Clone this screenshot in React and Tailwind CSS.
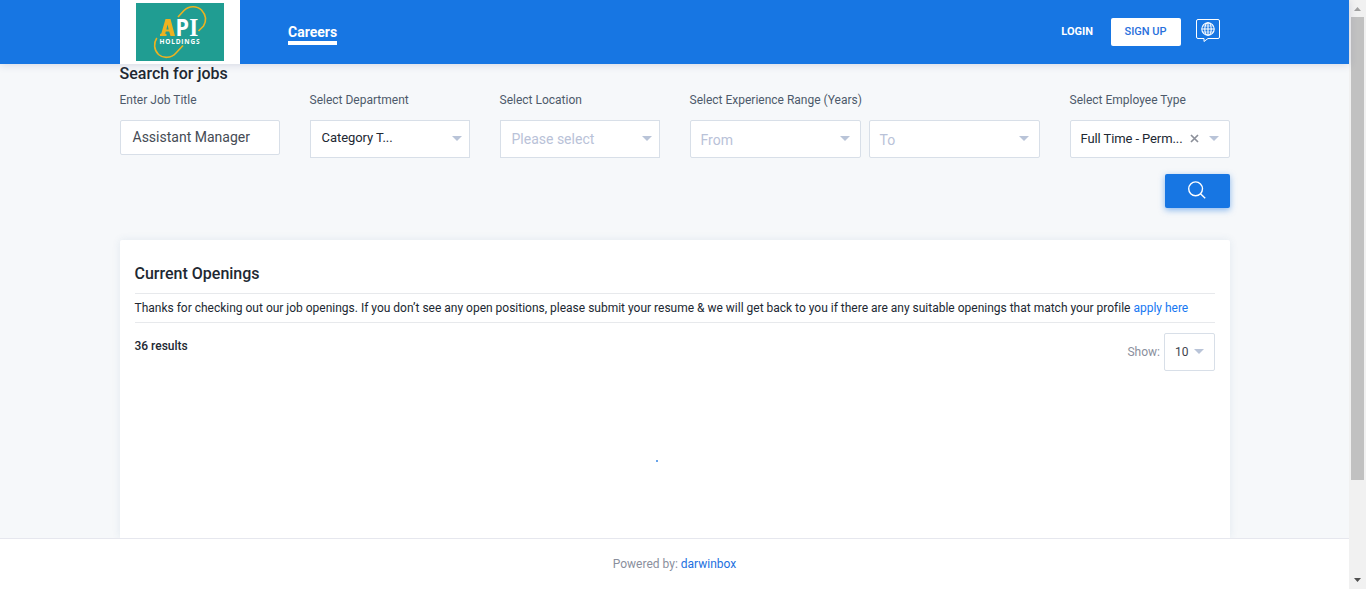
import React from "react";

function Caret({ className = "" }) {
  return (
    <svg viewBox="0 0 10 5" className={`mb-px h-[5px] w-[10px] shrink-0 fill-[#b9c4d8] ${className}`}>
      <path d="M0 0h10L5 5z" />
    </svg>
  );
}

function Label({ children }) {
  return <div className="-ml-[0.5px] h-4 whitespace-nowrap text-[12px] leading-4 text-[#4d5a6b]">{children}</div>;
}

function Select({ className = "", children, text = "" }) {
  return (
    <div className={`flex h-[38px] items-center justify-between border border-[#d8dfe8] bg-white ${className}`}>
      <span className={`whitespace-nowrap leading-4 ${text}`}>{children}</span>
      <Caret />
    </div>
  );
}

function Logo() {
  return (
    <svg viewBox="0 0 88 58" className="h-[58px] w-[88px] bg-[#209d92]">
      <g fill="none" stroke="#edb220" strokeWidth="1.6">
        <path d="M42 14 L48 7.5 C53 2.5 61 2.5 65.500 7 C70 12 70.500 18 67.500 23 L62.500 28" />
        <path d="M20.800 35 C17.500 40 17.800 47 22.500 51.500 C27 55.500 35 55.500 40 50 L47 42.500" />
      </g>
      <path fillRule="evenodd" d="M24 33v-2l1.300-.4L29.500 16h5L39 33h-4.500l-1.300-4.500h-3.400l-.6 2.200 1.300.3v2zM30.400 26.500h2.300l-1.200-5z" fill="#edb220" />
      <text x="39.500" y="33" className="fill-white font-['Noto_Sans'] text-[24px] font-bold" textLength="13.500" lengthAdjust="spacingAndGlyphs">P</text>
      <text x="53.300" y="33" className="fill-white font-['Liberation_Serif'] text-[26px] font-bold" textLength="9" lengthAdjust="spacingAndGlyphs">I</text>
      <text x="23.500" y="41" className="fill-white font-['Open_Sans'] text-[6.500px] font-bold" textLength="40" lengthAdjust="spacing">HOLDINGS</text>
    </svg>
  );
}

function LanguageIcon() {
  return (
    <svg viewBox="0 0 24 24" className="h-6 w-6" fill="none" stroke="white">
      <path d="M2 .5h20a1.500 1.500 0 0 1 1.500 1.500v16a1.500 1.500 0 0 1-1.500 1.500H12l-4 3v-3H2A1.500 1.500 0 0 1 .5 18V2A1.500 1.500 0 0 1 2 .5z" />
      <g strokeWidth="1.100">
        <circle cx="12" cy="10" r="6.200" />
        <ellipse cx="12" cy="10" rx="3.200" ry="6.200" />
        <path d="M12 3.800v12.400M5.800 10h12.400" />
        <path strokeWidth="0.600" d="M7 7h10M7 13h10" />
      </g>
    </svg>
  );
}

function Header() {
  return (
    <header className="relative z-10 flex h-16 shrink-0 bg-[#1776e3] pl-[120px] shadow-[0_1px_8px_rgba(60,70,130,0.18)]">
      <div className="flex h-16 w-[120px] justify-center bg-white pt-[3px]">
        <Logo />
      </div>
      <nav className="ml-12 pt-6">
        <a className="block h-[21px] w-[49px] whitespace-nowrap border-b-4 border-white text-[14px] font-bold leading-4 text-white">Careers</a>
      </nav>
      <div className="ml-auto mr-[129px] flex items-start pt-[18px]">
        <a className="mr-[18px] mt-1.5 text-[11px] font-bold leading-4 text-white">LOGIN</a>
        <a className="mr-[15px] flex h-7 w-[70px] items-center justify-center rounded-[2px] bg-white pr-px text-[11px] font-medium leading-4 text-[#2870dc]">SIGN UP</a>
        <div className="mt-px"><LanguageIcon /></div>
      </div>
    </header>
  );
}

function SearchForm() {
  return (
    <section>
      <h2 className="-ml-[0.5px] mt-px h-[18px] text-[16px] font-medium leading-[18px] text-[#212832]">Search for jobs</h2>
      <div className="mt-[9px] flex gap-[30px]">
        <div className="w-[160px]">
          <Label>Enter Job Title</Label>
          <div className="mt-3 flex h-[35px] items-center rounded-[2px] border border-[#d8dfe8] bg-white pl-[11.5px] pb-0.5 text-[14px] leading-4 text-[#454b54]">Assistant Manager</div>
        </div>
        <div className="w-[160px]">
          <Label>Select Department</Label>
          <Select className="mt-3 pl-[10.5px] pr-[7px]" text="-mt-[3px] text-[13px] tracking-[-0.05px] text-[#212832]">Category T...</Select>
        </div>
        <div className="w-[160px]">
          <Label>Select Location</Label>
          <Select className="mt-3 pl-[10.5px] pr-[7px]" text="text-[14px] text-[#b9c2d8]">Please select</Select>
        </div>
        <div className="w-[350px]">
          <Label>Select Experience Range (Years)</Label>
          <div className="mt-3 flex gap-2">
            <Select className="flex-1 rounded-[2px] pl-[9.5px] pr-[10px]" text="mt-0.5 text-[14px] text-[#b9c2d8]">From</Select>
            <Select className="flex-1 rounded-[2px] pl-[9.5px] pr-[10px]" text="mt-0.5 text-[14px] text-[#b9c2d8]">To</Select>
          </div>
        </div>
        <div className="w-[160px]">
          <Label>Select Employee Type</Label>
          <div className="mt-3 flex h-[38px] items-center rounded-[2px] border border-[#d8dfe8] bg-white pl-[9.5px]">
            <span className="w-[109.5px] whitespace-nowrap text-[13px] leading-4 tracking-[-0.1px] text-[#212832]">Full Time - Perm...</span>
            <svg viewBox="0 0 9 9" className="mb-0.5 h-[9px] w-[9px] shrink-0 stroke-[#8c909a]" strokeWidth="1.700"><path d="M1 1l7 7M8 1L1 8" /></svg>
            <Caret className="ml-[10px]" />
          </div>
        </div>
      </div>
      <button className="ml-auto mt-4 flex h-[34px] w-[65px] items-center justify-center rounded-[2px] bg-[#1776e3] pr-0.5 shadow-[0_2px_6px_rgba(23,118,227,0.5)]">
        <svg viewBox="0 0 18 18" className="-mt-0.5 h-[18px] w-[18px]" fill="none" stroke="white" strokeWidth="1.400">
          <circle cx="7.600" cy="7.800" r="6.900" />
          <path d="M12.500 12.700l4.700 4.500" />
        </svg>
      </button>
    </section>
  );
}

function Openings() {
  return (
    <section className="mt-8 flex-1 rounded-t-[2px] bg-white px-[15px] pt-6 shadow-[0_0_8px_rgba(50,100,150,0.1)]">
      <h2 className="-ml-[0.5px] h-[29px] text-[16px] font-medium leading-[19px] text-[#212832]">Current Openings</h2>
      <p className="h-[30px] whitespace-nowrap border-y border-[#e7e9ec] text-[12px] leading-7 tracking-[-0.004px] text-[#212832] -indent-[0.5px]">
        Thanks for checking out our job openings. If you don’t see any open positions, please submit your resume &amp; we will get back to you if there are any suitable openings that match your profile{" "}
        <a className="text-[#1778f2]">apply here</a>
      </p>
      <div className="flex justify-between pt-[10px]">
        <span className="-ml-[0.5px] pt-1 text-[12px] font-medium leading-[18px] text-[#212832]">36 results</span>
        <div className="flex items-center">
          <span className="mr-1 text-[12px] leading-4 text-[#8a8f9d]">Show:</span>
          <Select className="w-[51px] rounded-[2px] pl-[10px] pr-[10px]" text="text-[12px] text-[#3d434d]">10</Select>
        </div>
      </div>
      <div className="ml-[521px] mt-[89px] h-0.5 w-0.5 bg-[#68a4ea]" />
    </section>
  );
}

function Scrollbar() {
  return (
    <div className="flex h-full w-[17px] shrink-0 flex-col items-center bg-[#f1f1f1]">
      <svg viewBox="0 0 17 17" className="h-[17px] w-[17px] shrink-0 fill-[#a0a0a0]"><path d="M5 11h7L8.500 7z" /></svg>
      <div className="h-[463px] w-[13px] bg-[#c1c1c1]" />
      <svg viewBox="0 0 17 17" className="mt-auto h-[17px] w-[17px] shrink-0 fill-[#505050]"><path d="M5 6h7L8.500 10z" /></svg>
    </div>
  );
}

export default function App() {
  return (
    <div className="flex h-[589px] w-[1366px] overflow-hidden font-['Roboto',sans-serif]">
      <div className="flex min-w-0 flex-1 flex-col bg-[#f6f8fa]">
        <Header />
        <main className="ml-[120px] flex w-[1110px] flex-1 flex-col">
          <SearchForm />
          <Openings />
        </main>
        <footer className="z-10 h-[51px] shrink-0 border-t border-[#e6e7ee] bg-white pt-[17px] text-center text-[12px] leading-4 text-[#8a8f9d]">
          Powered by: <a className="text-[#2270e0]">darwinbox</a>
        </footer>
      </div>
      <Scrollbar />
    </div>
  );
}
